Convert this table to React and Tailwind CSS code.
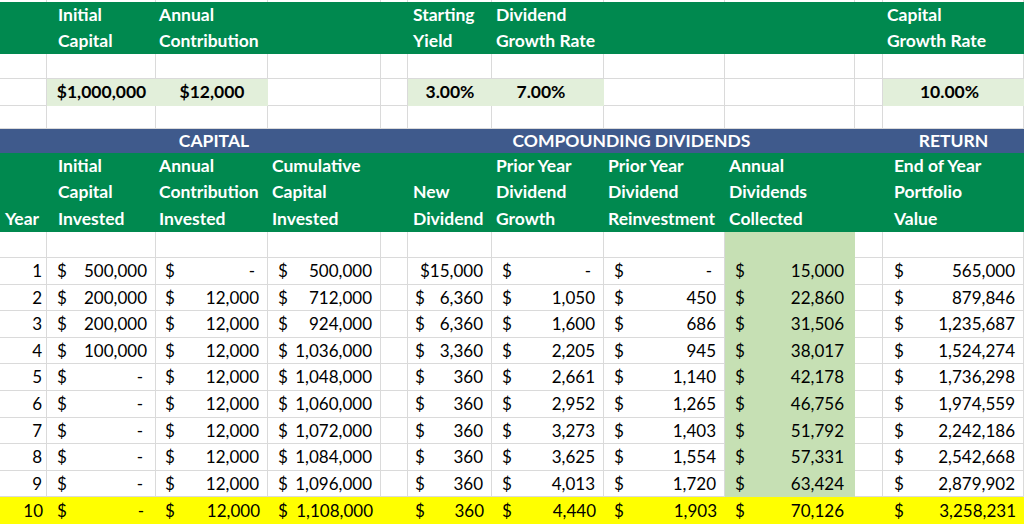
import React from "react";

const GRID =
  "grid grid-cols-[47px_109px_112px_113px_27px_84px_112px_121px_130px_28px_141px]";
const LINE = "border-r border-b border-[#dadada]";

const rows = [
  [1, "500,000", "-", "500,000", "$15,000", "-", "-", "15,000", "565,000"],
  [2, "200,000", "12,000", "712,000", "6,360", "1,050", "450", "22,860", "879,846"],
  [3, "200,000", "12,000", "924,000", "6,360", "1,600", "686", "31,506", "1,235,687"],
  [4, "100,000", "12,000", "1,036,000", "3,360", "2,205", "945", "38,017", "1,524,274"],
  [5, "-", "12,000", "1,048,000", "360", "2,661", "1,140", "42,178", "1,736,298"],
  [6, "-", "12,000", "1,060,000", "360", "2,952", "1,265", "46,756", "1,974,559"],
  [7, "-", "12,000", "1,072,000", "360", "3,273", "1,403", "51,792", "2,242,186"],
  [8, "-", "12,000", "1,084,000", "360", "3,625", "1,554", "57,331", "2,542,668"],
  [9, "-", "12,000", "1,096,000", "360", "4,013", "1,720", "63,424", "2,879,902"],
  [10, "-", "12,000", "1,108,000", "360", "4,440", "1,903", "70,126", "3,258,231"],
];

function Acc({ v, cls, pl = "pl-[10px]", pr = "pr-[8px]" }) {
  const dash = v === "-";
  if (v.startsWith("$")) {
    return (
      <div className={`flex items-center justify-end ${pr} ${cls}`}>
        <span>{v}</span>
      </div>
    );
  }
  return (
    <div className={`flex items-center justify-between ${pl} ${dash ? "pr-[12px]" : pr} ${cls}`}>
      <span>$</span>
      <span>{v}</span>
    </div>
  );
}

function EmptyRow({ h, greenI }) {
  return (
    <div className={`${GRID} ${h}`}>
      {Array.from({ length: 11 }).map((_, i) =>
        greenI && i === 8 ? (
          <div key={i} className="bg-[#c6e0b4]" />
        ) : (
          <div key={i} className={LINE} />
        )
      )}
    </div>
  );
}

function H({ lines, cls = "pl-[4px]" }) {
  return (
    <div className={`flex flex-col ${cls}`}>
      {lines.map((l, i) => (
        <div key={i} className="h-[26.3px] leading-[26.3px] whitespace-nowrap">
          {l}
        </div>
      ))}
    </div>
  );
}

export default function App() {
  return (
    <div className="w-[1024px] h-[525px] overflow-hidden bg-white text-black font-[Lato,sans-serif] text-[17px]">
      {/* top strip */}
      <div className={`${GRID} h-[2px]`}>
        {Array.from({ length: 11 }).map((_, i) => (
          <div key={i} className="border-r border-[#dadada]" />
        ))}
      </div>
      {/* top green header */}
      <div className={`${GRID} h-[52px] bg-[#00894f] text-white font-bold text-[17.5px]`}>
        <div />
        <H lines={["Initial", "Capital"]} cls="pl-[11px]" />
        <H lines={["Annual", "Contribution"]} cls="pl-[3px]" />
        <div />
        <div />
        <H lines={["Starting", "Yield"]} cls="pl-[5px]" />
        <H lines={["Dividend", "Growth Rate"]} />
        <div />
        <div />
        <div />
        <H lines={["Capital", "Growth Rate"]} />
      </div>
      <EmptyRow h="h-[25px]" />
      {/* values row */}
      <div className={`${GRID} h-[27px] font-bold text-[17.5px]`}>
        <div className={LINE} />
        <div className="bg-[#e2efda] flex items-center justify-center">$1,000,000</div>
        <div className="bg-[#e2efda] flex items-center justify-center">$12,000</div>
        <div className={LINE} />
        <div className={LINE} />
        <div className="bg-[#e2efda] flex items-center justify-center">3.00%</div>
        <div className="bg-[#e2efda] flex items-center justify-center pr-[14px]">7.00%</div>
        <div className={LINE} />
        <div className={LINE} />
        <div className={LINE} />
        <div className="bg-[#e2efda] flex items-center justify-center pr-[8px]">10.00%</div>
      </div>
      <EmptyRow h="h-[23px]" />
      {/* blue header */}
      <div className={`${GRID} h-[24px] bg-[#3f5a8c] text-white font-bold text-[17.5px] leading-[24px]`}>
        <div />
        <div className="col-span-3 text-center">CAPITAL</div>
        <div />
        <div className="col-span-4 text-center">COMPOUNDING DIVIDENDS</div>
        <div />
        <div className="text-center">RETURN</div>
      </div>
      {/* green header 3 lines */}
      <div className={`${GRID} h-[79px] bg-[#00894f] text-white font-bold text-[17.5px]`}>
        <H lines={["", "", "Year"]} cls="pl-[5px]" />
        <H lines={["Initial", "Capital", "Invested"]} cls="pl-[11px]" />
        <H lines={["Annual", "Contribution", "Invested"]} cls="pl-[3px]" />
        <H lines={["Cumulative", "Capital", "Invested"]} />
        <div />
        <H lines={["", "New", "Dividend"]} cls="pl-[5px]" />
        <H lines={["Prior Year", "Dividend", "Growth"]} />
        <H lines={["Prior Year", "Dividend", "Reinvestment"]} />
        <H lines={["Annual", "Dividends", "Collected"]} />
        <div />
        <H lines={["End of Year", "Portfolio", "Value"]} cls="pl-[11px]" />
      </div>
      <EmptyRow h="h-[26px]" greenI />
      {/* data rows */}
      {rows.map((r) => {
        const last = r[0] === 10;
        const cell = last ? "" : LINE;
        const rowBg = last ? "bg-[#ffff00]" : "";
        return (
          <div key={r[0]} className={`${GRID} h-[26.6px] ${rowBg}`}>
            <div className={`flex items-center justify-end pr-[4px] ${cell}`}>{r[0]}</div>
            <Acc v={r[1]} cls={cell} />
            <Acc v={r[2]} cls={cell} pl="pl-[9px]" />
            <Acc v={r[3]} cls={cell} />
            <div className={cell} />
            <Acc v={r[4]} cls={cell} pl="pl-[7px]" />
            <Acc v={r[5]} cls={cell} />
            <Acc v={r[6]} cls={cell} />
            <Acc
              v={r[7]}
              cls={last ? "" : "bg-[#c6e0b4] border-b border-[#c6e0b4]"}
              pr="pr-[11px]"
            />
            <div className={cell} />
            <Acc v={r[8]} cls={cell} pl="pl-[11px]" />
          </div>
        );
      })}
    </div>
  );
}
